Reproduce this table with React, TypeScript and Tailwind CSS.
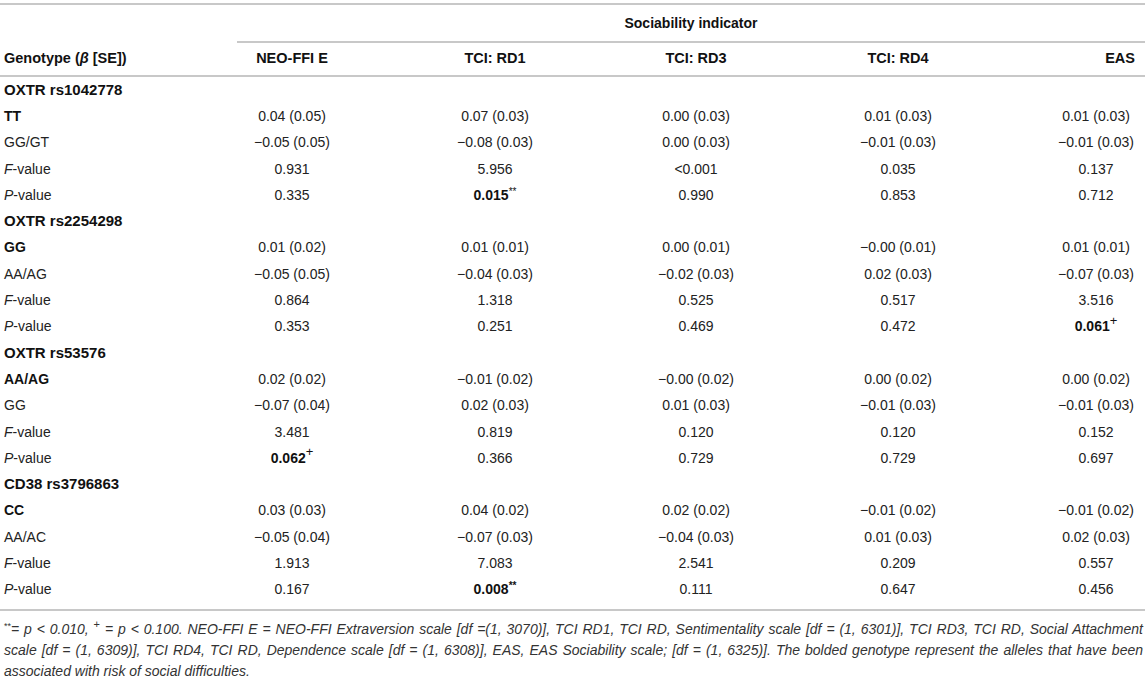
import React from "react";

type Cell = { v: string; bold?: boolean; sup?: string; supBold?: boolean };

interface Row {
  label: React.ReactNode;
  kind: "group" | "bold" | "plain";
  cells?: Cell[];
}

const c = (v: string): Cell => ({ v });

const rows: Row[] = [
  { label: "OXTR rs1042778", kind: "group" },
  { label: "TT", kind: "bold", cells: ["0.04 (0.05)", "0.07 (0.03)", "0.00 (0.03)", "0.01 (0.03)", "0.01 (0.03)"].map(c) },
  { label: "GG/GT", kind: "plain", cells: ["−0.05 (0.05)", "−0.08 (0.03)", "0.00 (0.03)", "−0.01 (0.03)", "−0.01 (0.03)"].map(c) },
  { label: "F", kind: "plain", cells: ["0.931", "5.956", "<0.001", "0.035", "0.137"].map(c) },
  {
    label: "P",
    kind: "plain",
    cells: [c("0.335"), { v: "0.015", bold: true, sup: "**" }, c("0.990"), c("0.853"), c("0.712")],
  },
  { label: "OXTR rs2254298", kind: "group" },
  { label: "GG", kind: "bold", cells: ["0.01 (0.02)", "0.01 (0.01)", "0.00 (0.01)", "−0.00 (0.01)", "0.01 (0.01)"].map(c) },
  { label: "AA/AG", kind: "plain", cells: ["−0.05 (0.05)", "−0.04 (0.03)", "−0.02 (0.03)", "0.02 (0.03)", "−0.07 (0.03)"].map(c) },
  { label: "F", kind: "plain", cells: ["0.864", "1.318", "0.525", "0.517", "3.516"].map(c) },
  {
    label: "P",
    kind: "plain",
    cells: [c("0.353"), c("0.251"), c("0.469"), c("0.472"), { v: "0.061", bold: true, sup: "+" }],
  },
  { label: "OXTR rs53576", kind: "group" },
  { label: "AA/AG", kind: "bold", cells: ["0.02 (0.02)", "−0.01 (0.02)", "−0.00 (0.02)", "0.00 (0.02)", "0.00 (0.02)"].map(c) },
  { label: "GG", kind: "plain", cells: ["−0.07 (0.04)", "0.02 (0.03)", "0.01 (0.03)", "−0.01 (0.03)", "−0.01 (0.03)"].map(c) },
  { label: "F", kind: "plain", cells: ["3.481", "0.819", "0.120", "0.120", "0.152"].map(c) },
  {
    label: "P",
    kind: "plain",
    cells: [{ v: "0.062", bold: true, sup: "+" }, c("0.366"), c("0.729"), c("0.729"), c("0.697")],
  },
  { label: "CD38 rs3796863", kind: "group" },
  { label: "CC", kind: "bold", cells: ["0.03 (0.03)", "0.04 (0.02)", "0.02 (0.02)", "−0.01 (0.02)", "−0.01 (0.02)"].map(c) },
  { label: "AA/AC", kind: "plain", cells: ["−0.05 (0.04)", "−0.07 (0.03)", "−0.04 (0.03)", "0.01 (0.03)", "0.02 (0.03)"].map(c) },
  { label: "F", kind: "plain", cells: ["1.913", "7.083", "2.541", "0.209", "0.557"].map(c) },
  {
    label: "P",
    kind: "plain",
    cells: [c("0.167"), { v: "0.008", bold: true, sup: "**", supBold: true }, c("0.111"), c("0.647"), c("0.456")],
  },
];

const headers = ["NEO-FFI E", "TCI: RD1", "TCI: RD3", "TCI: RD4"];
const cols = "grid grid-cols-[190px_204px_202px_200px_204px_145px]";

const Rule = ({ className = "" }: { className?: string }) => (
  <div className={`h-[2px] bg-[#c8c8c8] ${className}`} />
);

function Label({ row }: { row: Row }) {
  if (row.label === "F" || row.label === "P") {
    return (
      <span>
        <i>{row.label as string}</i>-value
      </span>
    );
  }
  if (row.kind === "group") return <span className="font-bold text-[15px] text-[#111]">{row.label}</span>;
  return <span className={row.kind === "bold" ? "font-bold text-[#111]" : ""}>{row.label}</span>;
}

function Value({ cell }: { cell: Cell }) {
  return (
    <span className={cell.bold ? "font-bold text-[#111]" : ""}>
      {cell.v}
      {cell.sup && (
        <sup
          className={`${cell.sup === "+" ? "text-[13px]" : "text-[10px]"} ${
            cell.supBold ? "font-bold" : "font-normal"
          }`}
        >
          {cell.sup}
        </sup>
      )}
    </span>
  );
}

export default function App() {
  return (
    <div
      className="w-[1145px] h-[678px] bg-white text-[#222] text-[14px] overflow-hidden"
      style={{ fontFamily: '"Liberation Sans", Arial, sans-serif' }}
    >
      <div className="pt-[3px]">
        <Rule />
        {/* spanning header */}
        <div className="flex h-[36px] items-center">
          <div className="w-[237px]" />
          <div className="flex-1 text-center font-bold text-[#111]">Sociability indicator</div>
        </div>
        <Rule className="ml-[237px]" />

        {/* column headers */}
        <div className={`${cols} h-[32px] items-center font-bold text-[#111] text-[14.5px]`}>
          <div className="pl-[4px]">
            Genotype (<i>β</i> [SE])
          </div>
          {headers.map((h) => (
            <div key={h} className="text-center">
              {h}
            </div>
          ))}
          <div className="text-right pr-[10px]">EAS</div>
        </div>
        <Rule />

        {/* body */}
        {rows.map((row, i) => (
          <div key={i} className={`${cols} h-[26.3px] items-center`}>
            <div className="pl-[4px] whitespace-nowrap">
              <Label row={row} />
            </div>
            {row.cells?.map((cell, j) => (
              <div key={j} className={j === 4 ? "text-center pl-[50px] pr-[3px]" : "text-center"}>
                <Value cell={cell} />
              </div>
            ))}
          </div>
        ))}
        <Rule className="mt-[6px]" />

        {/* footnote */}
        <p className="mt-[8px] pl-[4px] pr-[2px] italic text-[14px] leading-[21px] text-justify text-[#333]">
          <sup className="text-[9px] not-italic">**</sup>= <i>p</i> &lt; 0.010,{" "}
          <sup className="text-[11px] not-italic">+</sup> = <i>p</i> &lt; 0.100. NEO-FFI E = NEO-FFI Extraversion scale
          [df =(1, 3070)], TCI RD1, TCI RD, Sentimentality scale [df = (1, 6301)], TCI RD3, TCI RD, Social Attachment
          scale [df = (1, 6309)], TCI RD4, TCI RD, Dependence scale [df = (1, 6308)], EAS, EAS Sociability scale; [df =
          (1, 6325)]. The bolded genotype represent the alleles that have been associated with risk of social
          difficulties.
        </p>
      </div>
    </div>
  );
}
